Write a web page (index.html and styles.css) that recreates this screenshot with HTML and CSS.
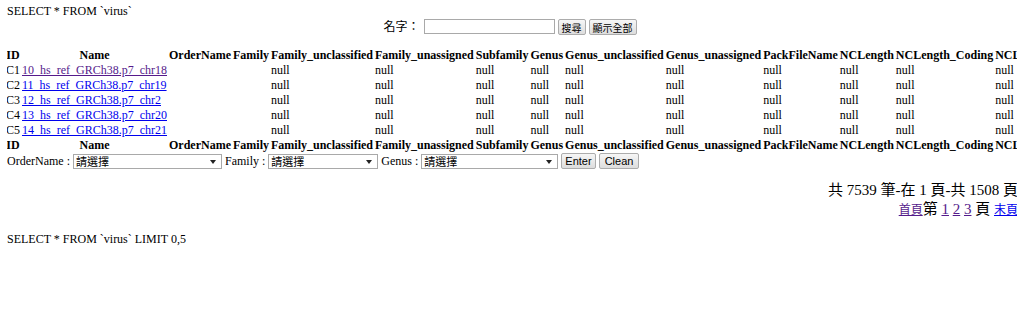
FILE: index.html
```html
<!DOCTYPE html>
<html lang="zh-Hant">
<head>
    <meta charset="UTF-8">
    <title>virus</title>
    <link rel="stylesheet" href="styles.css">
</head>
<body>
    <div class="query">SELECT * FROM `virus`</div>

    <form class="search">
        <label>名字：</label>
        <input type="text" class="keyword">
        <button type="button" class="btn btn-zh">搜尋</button>
        <button type="button" class="btn btn-zh">顯示全部</button>
    </form>

    <div class="table-wrap">
        <table class="data">
            <thead>
                <tr>
                    <th>ID</th><th>Name</th><th>OrderName</th><th>Family</th><th>Family_unclassified</th>
                    <th>Family_unassigned</th><th>Subfamily</th><th>Genus</th><th>Genus_unclassified</th>
                    <th>Genus_unassigned</th><th>PackFileName</th><th>NCLength</th><th>NCLength_Coding</th>
                    <th>NCLength_NonCoding</th><th>GC_Content</th><th>Host</th>
                </tr>
            </thead>
            <tbody>
                <tr>
                    <td>C1</td><td><a href="#" class="seen">10_hs_ref_GRCh38.p7_chr18</a></td><td></td><td></td><td>null</td>
                    <td>null</td><td>null</td><td>null</td><td>null</td><td>null</td><td>null</td><td>null</td><td>null</td>
                    <td>null</td><td>null</td><td>null</td>
                </tr>
                <tr>
                    <td>C2</td><td><a href="#">11_hs_ref_GRCh38.p7_chr19</a></td><td></td><td></td><td>null</td>
                    <td>null</td><td>null</td><td>null</td><td>null</td><td>null</td><td>null</td><td>null</td><td>null</td>
                    <td>null</td><td>null</td><td>null</td>
                </tr>
                <tr>
                    <td>C3</td><td><a href="#">12_hs_ref_GRCh38.p7_chr2</a></td><td></td><td></td><td>null</td>
                    <td>null</td><td>null</td><td>null</td><td>null</td><td>null</td><td>null</td><td>null</td><td>null</td>
                    <td>null</td><td>null</td><td>null</td>
                </tr>
                <tr>
                    <td>C4</td><td><a href="#">13_hs_ref_GRCh38.p7_chr20</a></td><td></td><td></td><td>null</td>
                    <td>null</td><td>null</td><td>null</td><td>null</td><td>null</td><td>null</td><td>null</td><td>null</td>
                    <td>null</td><td>null</td><td>null</td>
                </tr>
                <tr>
                    <td>C5</td><td><a href="#">14_hs_ref_GRCh38.p7_chr21</a></td><td></td><td></td><td>null</td>
                    <td>null</td><td>null</td><td>null</td><td>null</td><td>null</td><td>null</td><td>null</td><td>null</td>
                    <td>null</td><td>null</td><td>null</td>
                </tr>
            </tbody>
            <tfoot>
                <tr>
                    <th>ID</th><th>Name</th><th>OrderName</th><th>Family</th><th>Family_unclassified</th>
                    <th>Family_unassigned</th><th>Subfamily</th><th>Genus</th><th>Genus_unclassified</th>
                    <th>Genus_unassigned</th><th>PackFileName</th><th>NCLength</th><th>NCLength_Coding</th>
                    <th>NCLength_NonCoding</th><th>GC_Content</th><th>Host</th>
                </tr>
            </tfoot>
        </table>
    </div>

    <form class="filter">
        <label>OrderName :</label>
        <span class="pick pick-order"><select><option>請選擇</option></select></span>
        <label>Family :</label>
        <span class="pick pick-family"><select><option>請選擇</option></select></span>
        <label>Genus :</label>
        <span class="pick pick-genus"><select><option>請選擇</option></select></span>
        <button type="button" class="btn btn-en">Enter</button>
        <button type="button" class="btn btn-en btn-clean">Clean</button>
    </form>

    <div class="pager">
        <div class="pager-total">共 7539 筆-在 1 頁-共 1508 頁</div>
        <div class="pager-nav">
            <a href="#" class="seen small">首頁</a>第 <a href="#" class="seen">1</a> <a href="#" class="seen">2</a> <a href="#" class="seen">3</a> 頁 <a href="#" class="small">末頁</a>
        </div>
    </div>

    <div class="query query-limit">SELECT * FROM `virus` LIMIT 0,5</div>
</body>
</html>
```

FILE: styles.css
```css
body {
    margin: 4px 7px;
    font-family: 'Liberation Serif', 'Noto Sans CJK TC', serif;
    font-size: 12px;
    line-height: 14px;
    color: #000000;
    background: #ffffff;
}

a {
    color: #0000ee;
}

a.seen {
    color: #551a8b;
}

.query {
    height: 14px;
}

.query-limit {
    margin-top: 12px;
}

/* search bar */
.search {
    display: flex;
    justify-content: center;
    align-items: flex-start;
    gap: 3px;
    height: 17px;
    margin: 1px 0 12px;
    padding-right: 4px;
}

.search label {
    line-height: 16px;
    margin-right: 1px;
}

.keyword {
    width: 131px;
    height: 15px;
    box-sizing: border-box;
    margin: 0;
    padding: 0 2px;
    border: 1px solid #a9a9a9;
    background: #ffffff;
}

.btn {
    height: 16px;
    box-sizing: border-box;
    margin: 0;
    padding: 0 3px;
    border: 1px solid #acacac;
    border-radius: 2px;
    background: linear-gradient(#f6f6f6, #dddddd);
    font-family: 'Noto Sans CJK TC', sans-serif;
    font-size: 10px;
    line-height: 13px;
    color: #000000;
}

/* data table */
.table-wrap {
    overflow: hidden;
    margin-left: -2px;
}

.data {
    border-spacing: 0;
    white-space: nowrap;
    line-height: 15px;
}

.data th,
.data td {
    padding: 0 1px;
}

.data th {
    font-weight: bold;
    text-align: center;
}

.data td {
    text-align: left;
}

/* filter row */
.filter {
    display: flex;
    align-items: center;
    gap: 3px;
    height: 16px;
    margin: 0 0 12px;
}

.pick {
    position: relative;
    display: inline-block;
}

.pick select {
    appearance: none;
    -webkit-appearance: none;
    height: 15px;
    box-sizing: border-box;
    margin: 0;
    padding: 0 12px 0 2px;
    border: 1px solid #a9a9a9;
    border-radius: 0;
    background: #ffffff;
    font-family: 'Noto Sans CJK TC', sans-serif;
    font-size: 11px;
    line-height: 13px;
    color: #000000;
}

.pick::after {
    content: '';
    position: absolute;
    right: 6px;
    top: 6px;
    border-left: 3px solid transparent;
    border-right: 3px solid transparent;
    border-top: 4px solid #222222;
}

.pick-order select {
    width: 149px;
}

.pick-family select {
    width: 110px;
}

.pick-genus select {
    width: 137px;
}

.btn-en {
    font-family: 'Liberation Sans', sans-serif;
    font-size: 11px;
    padding: 0 3px;
}

.btn-clean {
    padding: 0 5px;
}

/* paging */
.pager {
    text-align: right;
    font-size: 15px;
    line-height: 19px;
    margin-right: -1px;
}

.pager .small {
    font-size: 12px;
}
```
